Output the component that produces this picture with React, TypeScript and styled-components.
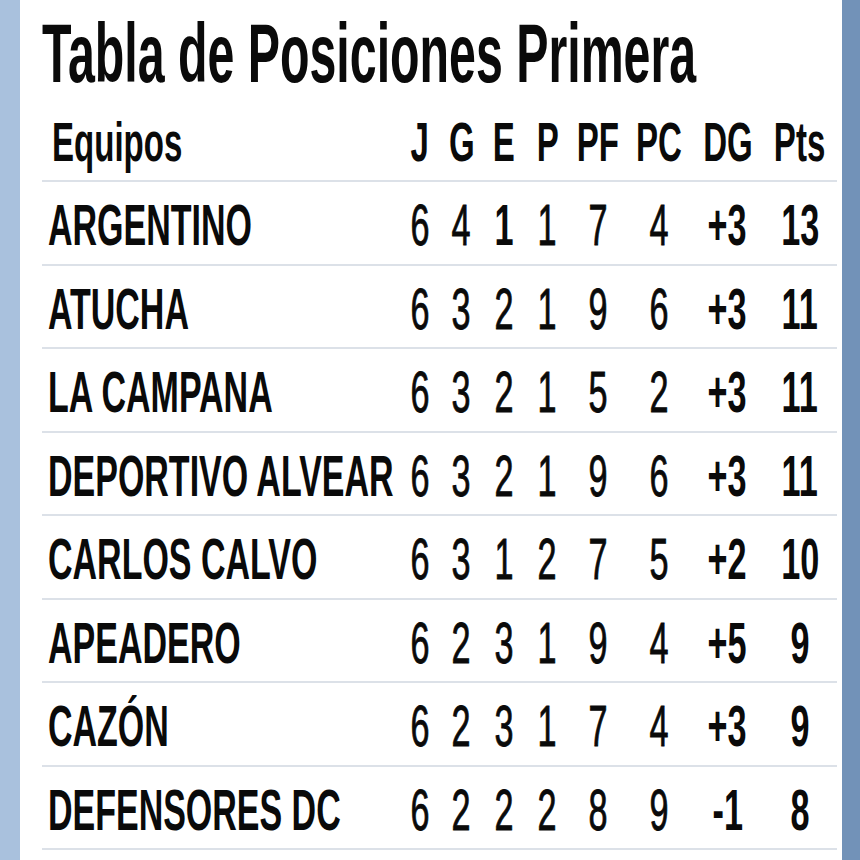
import styled, { createGlobalStyle } from 'styled-components';

type Team = {
  name: string;
  j: number;
  g: number;
  e: number;
  p: number;
  pf: number;
  pc: number;
  dg: string;
  pts: number;
  boldE?: boolean;
};

const teams: Team[] = [
  { name: 'ARGENTINO', j: 6, g: 4, e: 1, p: 1, pf: 7, pc: 4, dg: '+3', pts: 13, boldE: true },
  { name: 'ATUCHA', j: 6, g: 3, e: 2, p: 1, pf: 9, pc: 6, dg: '+3', pts: 11 },
  { name: 'LA CAMPANA', j: 6, g: 3, e: 2, p: 1, pf: 5, pc: 2, dg: '+3', pts: 11 },
  { name: 'DEPORTIVO ALVEAR', j: 6, g: 3, e: 2, p: 1, pf: 9, pc: 6, dg: '+3', pts: 11 },
  { name: 'CARLOS CALVO', j: 6, g: 3, e: 1, p: 2, pf: 7, pc: 5, dg: '+2', pts: 10 },
  { name: 'APEADERO', j: 6, g: 2, e: 3, p: 1, pf: 9, pc: 4, dg: '+5', pts: 9 },
  { name: 'CAZÓN', j: 6, g: 2, e: 3, p: 1, pf: 7, pc: 4, dg: '+3', pts: 9 },
  { name: 'DEFENSORES DC', j: 6, g: 2, e: 2, p: 2, pf: 8, pc: 9, dg: '-1', pts: 8 },
];

const columns = ['J', 'G', 'E', 'P', 'PF', 'PC', 'DG', 'Pts'];

export default function App() {
  return <>
    <GlobalStyle />
    <Page>
      <Panel>
        <Title><Squeeze>Tabla de Posiciones Primera</Squeeze></Title>
        <HeaderRow>
          <NameCell><Squeeze>Equipos</Squeeze></NameCell>
          { columns.map(c => <NumCell key={c}><Squeeze $center>{c}</Squeeze></NumCell>) }
        </HeaderRow>
        { teams.map(t => (
          <Row key={t.name}>
            <NameCell><Squeeze $scale={0.586}>{t.name}</Squeeze></NameCell>
            <NumCell $light><Squeeze $center>{t.j}</Squeeze></NumCell>
            <NumCell $light><Squeeze $center>{t.g}</Squeeze></NumCell>
            <NumCell $light={!t.boldE}><Squeeze $center>{t.e}</Squeeze></NumCell>
            <NumCell $light><Squeeze $center>{t.p}</Squeeze></NumCell>
            <NumCell $light><Squeeze $center>{t.pf}</Squeeze></NumCell>
            <NumCell $light><Squeeze $center>{t.pc}</Squeeze></NumCell>
            <NumCell><Squeeze $center>{t.dg}</Squeeze></NumCell>
            <NumCell><Squeeze $center>{t.pts}</Squeeze></NumCell>
          </Row>
        )) }
      </Panel>
    </Page>
  </>;
}

const GlobalStyle = createGlobalStyle`
  html, body {
    margin: 0;
    padding: 0;
    background: #ffffff;
  }
  body {
    font-family: "Liberation Sans", Arial, sans-serif;
    color: #0a0a0a;
  }
`;

const Page = styled.div`
  width: 860px;
  height: 860px;
  box-sizing: border-box;
  background: #ffffff;
  border-left: 20px solid #a9c1dd;
  border-right: 18px solid #7292b8;
  overflow: hidden;
`;

const Panel = styled.div`
  padding: 11px 5px 0 22px;
  display: flex;
  flex-direction: column;
`;

const Squeeze = styled.span<{ $center?: boolean; $scale?: number }>`
  display: inline-block;
  white-space: nowrap;
  transform: scaleX(${p => p.$scale ?? 0.59});
  transform-origin: ${p => p.$center ? 'center' : 'left'};
`;

const Title = styled.h1`
  margin: 0;
  height: 84px;
  font-size: 84px;
  line-height: 1;
  font-weight: 700;
  white-space: nowrap;

  & > span {
    transform: scaleX(0.575);
  }
`;

const grid = `
  display: grid;
  grid-template-columns: 358px 40px 43px 42px 45px 56px 66px 71px 74px;
  align-items: center;
  box-sizing: border-box;
  border-bottom: 2px solid #dce1e8;
`;

const HeaderRow = styled.div`
  ${grid}
  margin-top: 9px;
  height: 78px;
  font-size: 56px;
  line-height: 1;
  font-weight: 700;

  & > div:first-child {
    padding-left: 10px;
  }
`;

const Row = styled.div`
  ${grid}
  height: 83.5px;
  padding-top: 5px;
  font-size: 58px;
  line-height: 1;
  font-weight: 700;
`;

const NameCell = styled.div`
  padding-left: 6px;
  overflow: visible;
  white-space: nowrap;
`;

const NumCell = styled.div<{ $light?: boolean }>`
  display: flex;
  justify-content: center;
  white-space: nowrap;
  font-weight: ${p => p.$light ? 400 : 700};
  -webkit-text-stroke: ${p => p.$light ? '0.9px #0a0a0a' : '0'};
`;
